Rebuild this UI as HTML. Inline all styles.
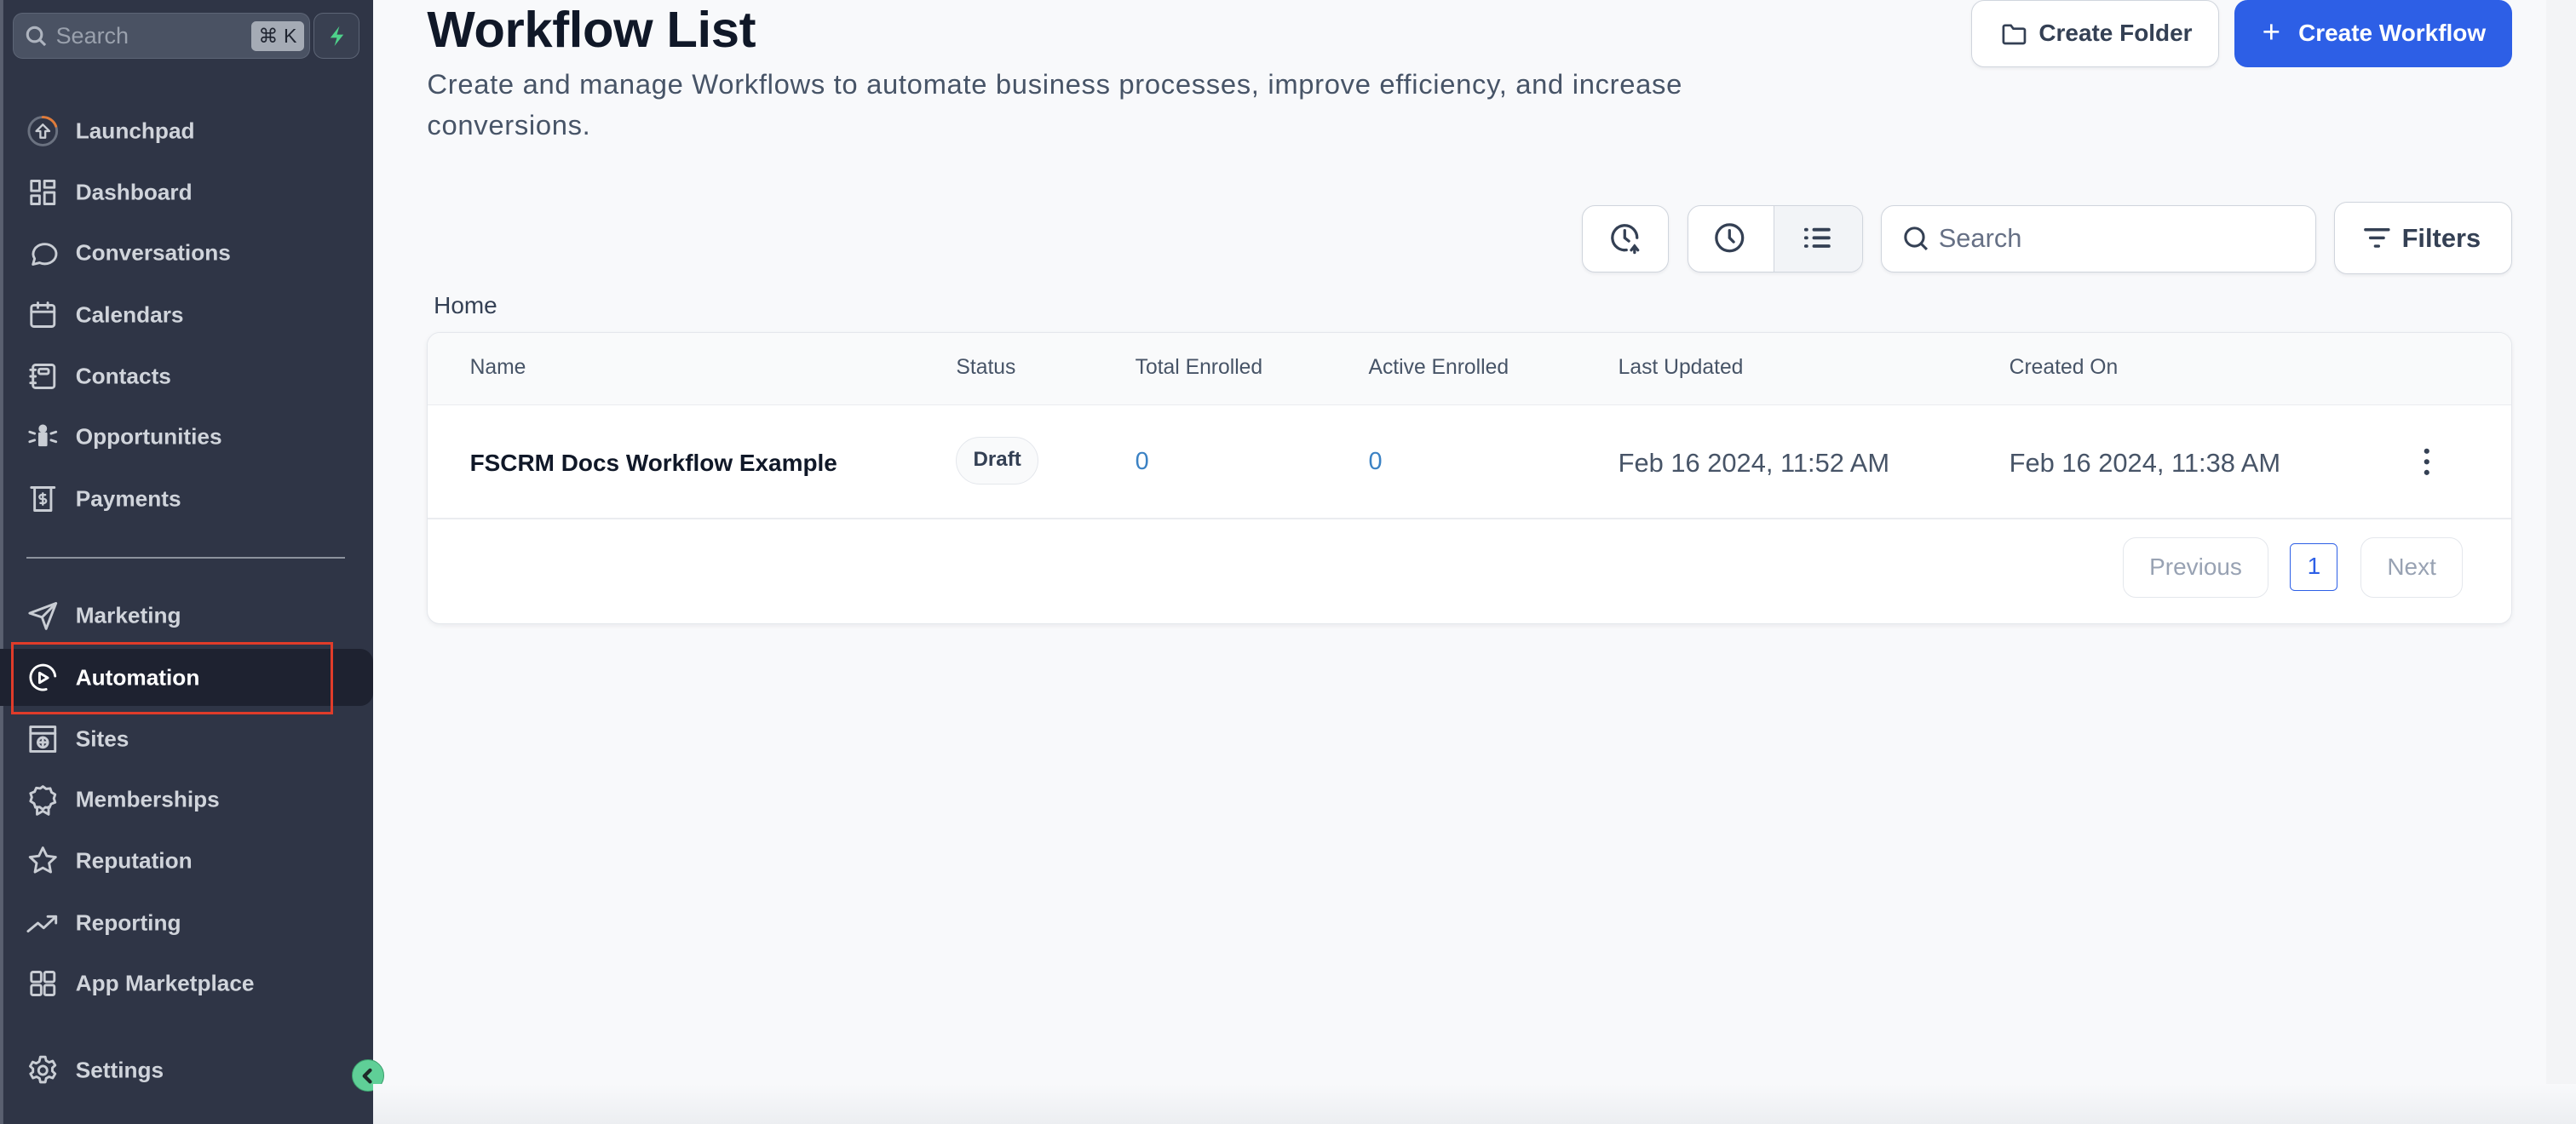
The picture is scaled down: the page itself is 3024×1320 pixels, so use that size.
<!DOCTYPE html>
<html><head><meta charset="utf-8"><style>
html,body{margin:0;padding:0;width:3024px;height:1320px;overflow:hidden;background:#f8f9fb}
#w{zoom:1.92857;width:1568px;height:685px;position:relative;font-family:"Liberation Sans",sans-serif;background:#f8f9fb}
.a{position:absolute}
#sb{left:0;top:0;width:227px;height:685px;background:#2f3546;box-shadow:inset 2px 0 0 #5a6070}
.nav{position:absolute;left:46px;font-size:13.6px;color:#d0d4db;font-weight:bold;line-height:16px;transform:translateY(-8px)}
.ic{position:absolute;left:16px;width:20px;height:20px;transform:translateY(-10px)}
.ic svg{width:20px;height:20px;fill:none;stroke:#c9cdd4;stroke-width:1.5;stroke-linecap:round;stroke-linejoin:round}
.btn{position:absolute;background:#fff;border:1px solid #d0d5dd;border-radius:8px;box-sizing:border-box;box-shadow:0 1px 2px rgba(16,24,40,.06)}
.th{position:absolute;top:217px;font-size:12.8px;color:#475467}
.td{position:absolute;top:273px;font-size:16px;color:#475467}
</style></head><body><div id="w">
<div id="sb" class="a">
 <div class="a" style="left:8px;top:8px;width:181px;height:28px;background:#4a5263;border:1px solid #5d6576;border-radius:6px;box-sizing:border-box"></div>
 <svg class="a" style="left:15px;top:15px" width="14" height="14" viewBox="0 0 14 14" fill="none" stroke="#aeb4bf" stroke-width="1.6"><circle cx="6" cy="6" r="4.3"/><path d="M9.2 9.2L12.5 12.5"/></svg>
 <div class="a" style="left:34px;top:14px;font-size:14px;color:#9aa1ad">Search</div>
 <div class="a" style="left:153px;top:13px;width:32px;height:18px;background:#a5abb5;border-radius:3px;font-size:12px;color:#1f2430;text-align:center;line-height:18px">⌘ K</div>
 <div class="a" style="left:191px;top:8px;width:28px;height:28px;background:#394051;border:1px solid #5d6576;border-radius:6px;box-sizing:border-box"></div>
 <svg class="a" style="left:198px;top:15px" width="14" height="14" viewBox="0 0 14 14"><path d="M8.5 1L3 8h4l-1.5 5L11 6H7z" fill="#4ed18a"/></svg>

 <div class="ic" style="top:80px"><svg viewBox="0 0 20 20"><circle cx="10" cy="10" r="8.5" stroke="#6b7280"/><path d="M10 1.5a8.5 8.5 0 0 1 8 5.5" stroke="#e07b39"/><path d="M10 6l-4 4h2.5v4h3v-4H14z" stroke-width="1.2"/></svg></div>
 <div class="nav" style="top:80px">Launchpad</div>
 <div class="ic" style="top:117px"><svg viewBox="0 0 20 20"><rect x="3" y="3" width="5" height="6"/><rect x="11" y="3" width="6" height="4"/><rect x="3" y="12" width="5" height="5"/><rect x="11" y="10" width="6" height="7"/></svg></div>
 <div class="nav" style="top:117px">Dashboard</div>
 <div class="ic" style="top:154px"><svg viewBox="0 0 20 20"><path d="M4 17l1-3.5A7 6 0 1 1 8 16z"/></svg></div>
 <div class="nav" style="top:154px">Conversations</div>
 <div class="ic" style="top:192px"><svg viewBox="0 0 20 20"><rect x="3" y="4" width="14" height="13" rx="1.5"/><path d="M3 8h14M7 2.5v3M13 2.5v3"/></svg></div>
 <div class="nav" style="top:192px">Calendars</div>
 <div class="ic" style="top:229px"><svg viewBox="0 0 20 20"><rect x="4" y="3" width="13" height="14" rx="1.5"/><rect x="7.5" y="5.5" width="6" height="3" rx="1"/><path d="M2.5 6h3M2.5 10h3M2.5 14h3"/></svg></div>
 <div class="nav" style="top:229px">Contacts</div>
 <div class="ic" style="top:266px"><svg viewBox="0 0 20 20"><circle cx="10" cy="5" r="1.8" fill="#c9cdd4"/><path d="M8 8h4v7H8z" fill="#c9cdd4"/><path d="M2 7l3 1M2 13l3-1M18 7l-3 1M18 13l-3-1"/></svg></div>
 <div class="nav" style="top:266px">Opportunities</div>
 <div class="ic" style="top:304px"><svg viewBox="0 0 20 20"><path d="M3 3h14M5 3v14h10V3"/><path d="M11.5 7.5h-2.3a1.2 1.2 0 0 0 0 2.5h1.6a1.2 1.2 0 0 1 0 2.5H8.5M10 6.5v7" stroke-width="1.2"/></svg></div>
 <div class="nav" style="top:304px">Payments</div>
 <div class="a" style="left:16px;top:339px;width:194px;height:1px;background:#8c929d"></div>
 <div class="ic" style="top:375px"><svg viewBox="0 0 20 20"><path d="M2 8.5L18 2.5 12 18 9.5 11z M9.5 11L18 2.5"/></svg></div>
 <div class="nav" style="top:375px">Marketing</div>
 <div class="a" style="left:0;top:395px;width:227px;height:35px;background:#1e2230;border-radius:0 8px 8px 0"></div>
 <div class="a" style="left:7px;top:391px;width:196px;height:44px;border:2px solid #e03c2a;box-sizing:border-box"></div>
 <div class="ic" style="top:413px"><svg viewBox="0 0 20 20" style="stroke:#fff"><path d="M17.5 9A7.5 7.5 0 1 0 12 17"/><path d="M8 7v6l5-3z"/></svg></div>
 <div class="nav" style="top:413px;color:#fff">Automation</div>
 <div class="ic" style="top:450px"><svg viewBox="0 0 20 20"><rect x="2.5" y="2.5" width="15" height="15"/><path d="M2.5 6.5h15"/><circle cx="10" cy="12" r="3"/><path d="M7 12h6M10 9v6"/></svg></div>
 <div class="nav" style="top:450px">Sites</div>
 <div class="ic" style="top:487px"><svg viewBox="0 0 20 20"><path d="M10 2l2 1.5 2.5-.3.8 2.4 2.2 1.3-.8 2.4.8 2.4-2.5 1-1 2.3-2.5-.3L10 16l-2-1.5-2.5.3-.8-2.4L2.5 11l.8-2.4-.8-2.4 2.5-1 1-2.3 2.5.3z"/><path d="M6.5 14.5V19l3.5-2 3.5 2v-4.5"/></svg></div>
 <div class="nav" style="top:487px">Memberships</div>
 <div class="ic" style="top:524px"><svg viewBox="0 0 20 20"><path d="M10 2l2.4 5 5.4.7-4 3.7 1 5.4L10 14.2 5.2 16.8l1-5.4-4-3.7 5.4-.7z"/></svg></div>
 <div class="nav" style="top:524px">Reputation</div>
 <div class="ic" style="top:562px"><svg viewBox="0 0 20 20"><path d="M1 15l6-5 3.5 3L18 6M13 6h5v4"/></svg></div>
 <div class="nav" style="top:562px">Reporting</div>
 <div class="ic" style="top:599px"><svg viewBox="0 0 20 20"><rect x="3" y="3" width="6" height="6" rx="1"/><rect x="11" y="3" width="6" height="6" rx="1"/><rect x="3" y="11" width="6" height="6" rx="1"/><rect x="11" y="11" width="6" height="6" rx="1"/></svg></div>
 <div class="nav" style="top:599px">App Marketplace</div>
 <div class="ic" style="top:652px"><svg viewBox="0 0 20 20"><circle cx="10" cy="10" r="2.6"/><path d="M8.5 1.8h3l.5 2.3 1.8 1 2.2-.8 1.5 2.6-1.7 1.6v2l1.7 1.6-1.5 2.6-2.2-.8-1.8 1-.5 2.3h-3l-.5-2.3-1.8-1-2.2.8-1.5-2.6L4 11V9L2.3 7.5l1.5-2.6 2.2.8 1.8-1z"/></svg></div>
 <div class="nav" style="top:652px">Settings</div>
</div>
<div class="a" style="left:214px;top:645px;width:20px;height:20px;border-radius:50%;background:#5fcf97;border:1px solid #3a9e6c;box-sizing:border-box"></div>
<svg class="a" style="left:218px;top:649px" width="12" height="12" viewBox="0 0 12 12"><path d="M7.5 2.5L4 6l3.5 3.5" fill="none" stroke="#1e2a28" stroke-width="2.2" stroke-linecap="round" stroke-linejoin="round"/></svg>
<div class="a" style="left:1550px;top:0;width:18px;height:685px;background:#f3f4f6"></div>
<div class="a" style="left:227px;top:660px;width:1341px;height:25px;background:linear-gradient(#f8f9fb,#eceef1)"></div>

<div class="a" style="left:260px;top:0px;font-size:31px;font-weight:bold;color:#101828;letter-spacing:-.2px">Workflow List</div>
<div class="a" style="left:260px;top:39px;font-size:17px;letter-spacing:.35px;color:#475467;line-height:25px;width:790px">Create and manage Workflows to automate business processes, improve efficiency, and increase conversions.</div>

<div class="btn" style="left:1200px;top:0;width:151px;height:41px"></div>
<svg class="a" style="left:1218px;top:13px" width="16" height="16" viewBox="0 0 16 16" fill="none" stroke="#344054" stroke-width="1.4"><path d="M1.5 3.5a1 1 0 0 1 1-1h3.5l1.5 2h6a1 1 0 0 1 1 1v7a1 1 0 0 1-1 1h-11a1 1 0 0 1-1-1z"/></svg>
<div class="a" style="left:1241px;top:12px;font-size:14.5px;color:#344054;font-weight:bold">Create Folder</div>
<div class="a" style="left:1360px;top:0;width:169px;height:41px;background:#2d5fe6;border-radius:8px"></div>
<div class="a" style="left:1377px;top:9px;font-size:19px;color:#fff">+</div>
<div class="a" style="left:1399px;top:12px;font-size:14.5px;color:#fff;font-weight:bold">Create Workflow</div>

<div class="btn" style="left:963px;top:125px;width:53px;height:41px"></div>
<svg class="a" style="left:979px;top:135px" width="20" height="20" viewBox="0 0 20 20" fill="none" stroke="#344054" stroke-width="1.7" stroke-linecap="round"><path d="M17.5 10A7.5 7.5 0 1 0 11 17.4"/><path d="M10 5.5V10l2.5 2M14 17.5l2-2.5 2 2.5M16 15v4"/></svg>
<div class="btn" style="left:1027px;top:125px;width:107px;height:41px;overflow:hidden"><div class="a" style="left:52px;top:0;width:54px;height:41px;background:#f2f4f7;border-left:1px solid #d0d5dd"></div></div>
<svg class="a" style="left:1043px;top:135px" width="20" height="20" viewBox="0 0 20 20" fill="none" stroke="#344054" stroke-width="1.7" stroke-linecap="round"><circle cx="10" cy="10" r="8"/><path d="M10 5.5V10l2.5 2.5"/></svg>
<svg class="a" style="left:1097px;top:136px" width="18" height="18" viewBox="0 0 18 18" fill="none" stroke="#344054" stroke-width="2" stroke-linecap="round"><path d="M7 4h9M7 9h9M7 14h9M2 4h.5M2 9h.5M2 14h.5"/></svg>
<div class="btn" style="left:1145px;top:125px;width:265px;height:41px"></div>
<svg class="a" style="left:1158px;top:137px" width="17" height="17" viewBox="0 0 17 17" fill="none" stroke="#344054" stroke-width="1.6"><circle cx="7.5" cy="7.5" r="5.5"/><path d="M11.5 11.5l3.5 3.5"/></svg>
<div class="a" style="left:1180px;top:136px;font-size:16px;color:#667085">Search</div>
<div class="btn" style="left:1421px;top:123px;width:108px;height:44px"></div>
<svg class="a" style="left:1438px;top:137px" width="18" height="16" viewBox="0 0 18 16" fill="none" stroke="#344054" stroke-width="1.8" stroke-linecap="round"><path d="M2 3h14M5 8h8M8 13h2"/></svg>
<div class="a" style="left:1462px;top:136px;font-size:16px;color:#344054;font-weight:bold">Filters</div>

<div class="a" style="left:264px;top:178px;font-size:14.5px;color:#344054">Home</div>

<div class="a" style="left:260px;top:202px;width:1269px;height:178px;background:#fff;border:1px solid #e4e7ec;border-radius:8px;box-sizing:border-box;box-shadow:0 1px 3px rgba(16,24,40,.06);overflow:hidden">
 <div class="a" style="left:0;top:0;width:1269px;height:44px;background:#f9fafb;border-bottom:1px solid #eaecf0"></div>
 <div class="a" style="left:0;top:113px;width:1269px;height:1px;background:#eaecf0"></div>
</div>
<div class="th" style="left:286px">Name</div>
<div class="th" style="left:582px">Status</div>
<div class="th" style="left:691px">Total Enrolled</div>
<div class="th" style="left:833px">Active Enrolled</div>
<div class="th" style="left:985px">Last Updated</div>
<div class="th" style="left:1223px">Created On</div>
<div class="td" style="left:286px;color:#101828;font-weight:bold;font-size:14.5px;top:274px">FSCRM Docs Workflow Example</div>
<div class="a" style="left:582px;top:266px;width:50px;height:29px;border:1px solid #e4e7ec;border-radius:15px;background:#f9fafb;box-sizing:border-box;font-size:12.5px;color:#344054;text-align:center;line-height:27px;font-weight:bold">Draft</div>
<div class="td" style="left:691px;color:#3b82c4;font-size:15px">0</div>
<div class="td" style="left:833px;color:#3b82c4;font-size:15px">0</div>
<div class="td" style="left:985px">Feb 16 2024, 11:52 AM</div>
<div class="td" style="left:1223px">Feb 16 2024, 11:38 AM</div>
<svg class="a" style="left:1474px;top:272px" width="6" height="18" viewBox="0 0 6 18" fill="#344054"><circle cx="3" cy="2.5" r="1.6"/><circle cx="3" cy="9" r="1.6"/><circle cx="3" cy="15.5" r="1.6"/></svg>
<div class="btn" style="left:1292px;top:327px;width:89px;height:37px;border-color:#e4e7ec;box-shadow:none;font-size:14.5px;color:#98a2b3;text-align:center;line-height:35px">Previous</div>
<div class="a" style="left:1394px;top:331px;width:29px;height:29px;border:1px solid #2d5fe6;border-radius:3px;box-sizing:border-box;font-size:14.5px;color:#2d5fe6;text-align:center;line-height:27px">1</div>
<div class="btn" style="left:1437px;top:327px;width:62px;height:37px;border-color:#e4e7ec;box-shadow:none;font-size:14.5px;color:#98a2b3;text-align:center;line-height:35px">Next</div>
</div></body></html>
